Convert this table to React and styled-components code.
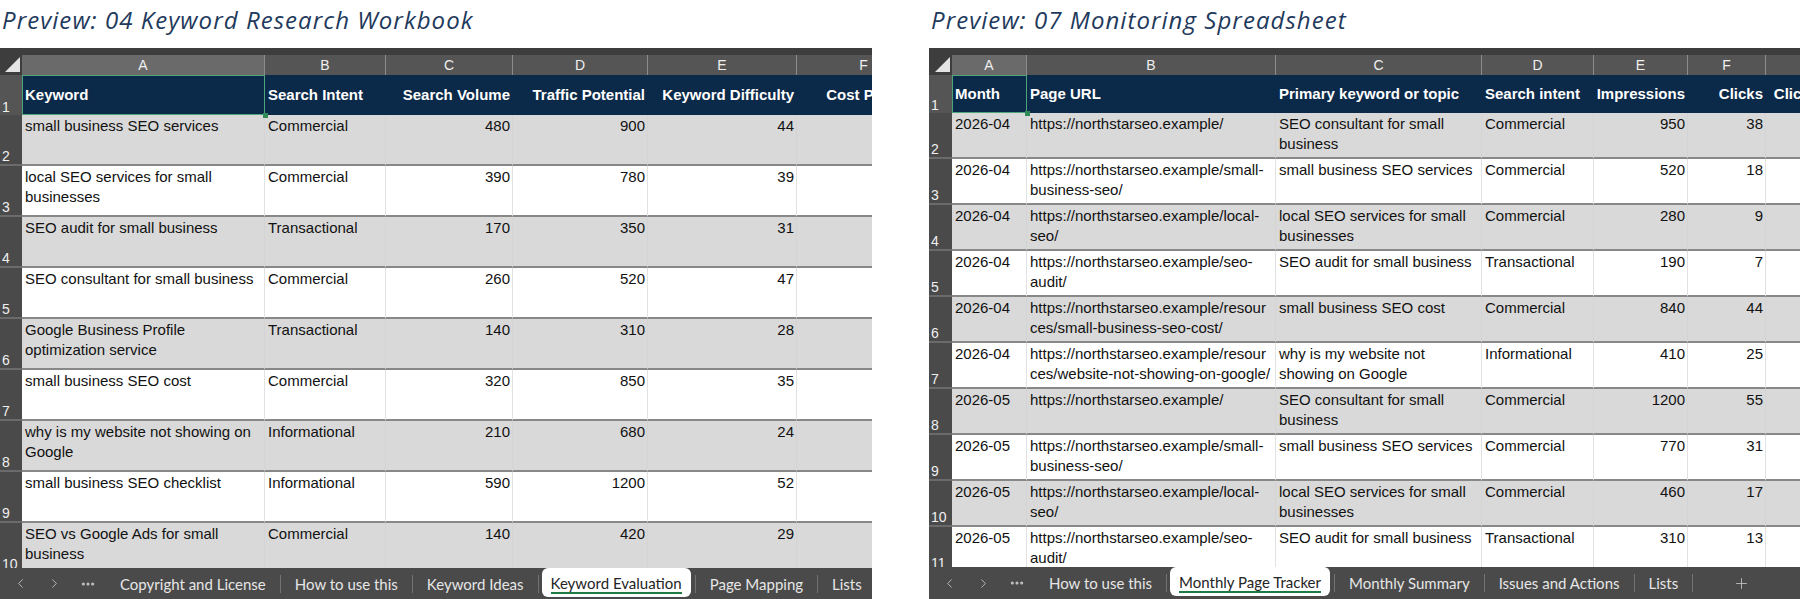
import React from "react";
import styled, { createGlobalStyle, css } from "styled-components";
import { ChevronLeft, ChevronRight, Ellipsis, Plus } from "lucide-react";

const GlobalStyle = createGlobalStyle`
  html, body { margin: 0; padding: 0; background: #fff; }
  body { font-family: "Liberation Sans", Arial, sans-serif; overflow: hidden; }
`;

const Page = styled.div`
  display: flex;
  gap: 57px;
  width: 1800px;
  height: 599px;
  overflow: hidden;
`;

const Panel = styled.section`
  display: flex;
  flex-direction: column;
  flex-shrink: 0;
  width: ${(p) => p.$width}px;
  height: 100%;
`;

const Title = styled.h2`
  margin: 0;
  height: 48px;
  padding-left: 2px;
  font-family: "Open Sans", sans-serif;
  font-style: italic;
  font-weight: 400;
  font-size: 24px;
  letter-spacing: 1.05px;
  line-height: 40px;
  color: #1f3a5c;
  white-space: nowrap;
`;

const Sheet = styled.div`
  flex: 1;
  display: flex;
  flex-direction: column;
  overflow: hidden;
  background: #4a4a4a;
`;

const Body = styled.div`
  flex: 1;
  overflow: hidden;
`;

const Row = styled.div`
  display: grid;
  grid-template-columns: ${(p) => p.$cols};
  height: ${(p) => p.$h}px;
`;

const LetterRow = styled(Row)`
  align-items: end;
  background: #3d3d3d;
`;

const Corner = styled.div`
  height: 27px;
  box-sizing: border-box;
  display: flex;
  align-items: flex-end;
  justify-content: flex-end;
  padding: 0 2px 3px 0;
`;

const CornerMark = styled.span`
  width: 0;
  height: 0;
  border-left: 15px solid transparent;
  border-bottom: 15px solid #e4e4e4;
`;

const Letter = styled.div`
  height: 20px;
  box-sizing: border-box;
  background: ${(p) => (p.$active ? "#6a6a6a" : "#555555")};
  border-right: 1px solid #8c8c8c;
  color: #efefef;
  font-size: 14px;
  line-height: 20px;
  text-align: center;
`;

const RowNum = styled.div`
  box-sizing: border-box;
  background: ${(p) => (p.$active ? "#555555" : "#4a4a4a")};
  border-bottom: ${(p) => (p.$line ? "2px solid #6b6b6b" : "none")};
  color: #f0f0f0;
  font-size: 14px;
  line-height: 16px;
  display: flex;
  align-items: flex-end;
  padding: 0 0 0 2px;
  overflow: hidden;
`;

const HeadCell = styled.div`
  position: relative;
  box-sizing: border-box;
  background: #0b2948;
  color: #fff;
  font-weight: 700;
  font-size: 15px;
  display: flex;
  align-items: center;
  justify-content: ${(p) => (p.$right ? "flex-end" : "flex-start")};
  padding: 0 3px 1px 3px;
  white-space: nowrap;
  ${(p) =>
    p.$selected &&
    css`
      box-shadow: inset 0 0 0 1px #4fa57a;
      &::after {
        content: "";
        position: absolute;
        right: -3px;
        bottom: -3px;
        width: 5px;
        height: 5px;
        background: #2f8a57;
        z-index: 2;
      }
    `}
`;

const DataCell = styled.div`
  box-sizing: border-box;
  background: ${(p) => (p.$shade ? "#d9d9d9" : "#ffffff")};
  border-bottom: 2px solid #888888;
  border-right: 1px solid ${(p) => (p.$shade ? "#d4d4d4" : "#e2e2e2")};
  padding: 1px 2px 0 3px;
  color: #111;
  font-size: 15px;
  line-height: 19.5px;
  text-align: ${(p) => (p.$right ? "right" : "left")};
  white-space: pre;
  overflow: hidden;
`;

const TabBar = styled.div`
  flex-shrink: 0;
  height: ${(p) => p.$h}px;
  background: #4a4a4a;
  display: flex;
  align-items: center;
  font-family: Lato, "Open Sans", sans-serif;
  font-size: 15px;
  color: #e6e6e6;
  white-space: nowrap;
  & > * {
    flex-shrink: 0;
  }
`;

const NavButton = styled.span`
  width: 34px;
  display: flex;
  justify-content: center;
  color: #c4c4c4;
  &:first-child {
    margin-left: 3px;
  }
`;

const Tab = styled.span`
  padding: 0 14px;
  &:nth-child(4) {
    padding-left: 15px;
  }
`;

const ActiveTab = styled.span`
  align-self: flex-start;
  height: 29px;
  margin: 0 4px 0 3px;
  padding: 0 9px;
  background: #fff;
  border-radius: 6px;
  color: #242424;
  display: flex;
  align-items: center;
`;

const ActiveLabel = styled.span`
  padding-top: 3px;
  border-bottom: 2px solid #1e7a45;
  line-height: 18px;
`;

const Sep = styled.span`
  width: 1px;
  height: 18px;
  background: #727272;
`;

const AddSheet = styled.span`
  padding: 0 40px;
  display: flex;
  color: #bdbdbd;
`;

const tpl = (cols) => cols.map((c) => `${c}px`).join(" ");

const keywordSheet = {
  title: "Preview: 04 Keyword Research Workbook",
  width: 872,
  cols: [22, 243, 121, 127, 135, 149, 134],
  headH: 40,
  rowH: 51,
  tabH: 31,
  right: [false, false, true, true, true, true],
  head: ["Keyword", "Search Intent", "Search Volume", "Traffic Potential", "Keyword Difficulty", "Cost Per Click"],
  rows: [
    ["small business SEO services", "Commercial", "480", "900", "44", ""],
    ["local SEO services for small\nbusinesses", "Commercial", "390", "780", "39", ""],
    ["SEO audit for small business", "Transactional", "170", "350", "31", ""],
    ["SEO consultant for small business", "Commercial", "260", "520", "47", ""],
    ["Google Business Profile\noptimization service", "Transactional", "140", "310", "28", ""],
    ["small business SEO cost", "Commercial", "320", "850", "35", ""],
    ["why is my website not showing on\nGoogle", "Informational", "210", "680", "24", ""],
    ["small business SEO checklist", "Informational", "590", "1200", "52", ""],
    ["SEO vs Google Ads for small\nbusiness", "Commercial", "140", "420", "29", ""],
  ],
  tabs: ["Copyright and License", "How to use this", "Keyword Ideas", "Keyword Evaluation", "Page Mapping", "Lists"],
  active: "Keyword Evaluation",
  add: false,
};

const monitorSheet = {
  title: "Preview: 07 Monitoring Spreadsheet",
  width: 871,
  cols: [23, 75, 249, 206, 112, 94, 78, 140],
  headH: 38,
  rowH: 46,
  tabH: 32,
  right: [false, false, false, false, true, true, true],
  head: ["Month", "Page URL", "Primary keyword or topic", "Search intent", "Impressions", "Clicks", "Click-through rate"],
  rows: [
    ["2026-04", "https://northstarseo.example/", "SEO consultant for small\nbusiness", "Commercial", "950", "38", ""],
    ["2026-04", "https://northstarseo.example/small-\nbusiness-seo/", "small business SEO services", "Commercial", "520", "18", ""],
    ["2026-04", "https://northstarseo.example/local-\nseo/", "local SEO services for small\nbusinesses", "Commercial", "280", "9", ""],
    ["2026-04", "https://northstarseo.example/seo-\naudit/", "SEO audit for small business", "Transactional", "190", "7", ""],
    ["2026-04", "https://northstarseo.example/resour\nces/small-business-seo-cost/", "small business SEO cost", "Commercial", "840", "44", ""],
    ["2026-04", "https://northstarseo.example/resour\nces/website-not-showing-on-google/", "why is my website not\nshowing on Google", "Informational", "410", "25", ""],
    ["2026-05", "https://northstarseo.example/", "SEO consultant for small\nbusiness", "Commercial", "1200", "55", ""],
    ["2026-05", "https://northstarseo.example/small-\nbusiness-seo/", "small business SEO services", "Commercial", "770", "31", ""],
    ["2026-05", "https://northstarseo.example/local-\nseo/", "local SEO services for small\nbusinesses", "Commercial", "460", "17", ""],
    ["2026-05", "https://northstarseo.example/seo-\naudit/", "SEO audit for small business", "Transactional", "310", "13", ""],
  ],
  tabs: ["How to use this", "Monthly Page Tracker", "Monthly Summary", "Issues and Actions", "Lists"],
  active: "Monthly Page Tracker",
  add: true,
};

const LETTERS = "ABCDEFGH";

const SheetTabs = ({ sheet }) => (
  <TabBar $h={sheet.tabH}>
    <NavButton>
      <ChevronLeft size={15} strokeWidth={1.4} />
    </NavButton>
    <NavButton>
      <ChevronRight size={15} strokeWidth={1.4} />
    </NavButton>
    <NavButton>
      <Ellipsis size={16} strokeWidth={2.6} />
    </NavButton>
    {sheet.tabs.map((name, i) => (
      <React.Fragment key={name}>
        {i > 0 && <Sep />}
        {name === sheet.active ? (
          <ActiveTab>
            <ActiveLabel>{name}</ActiveLabel>
          </ActiveTab>
        ) : (
          <Tab>{name}</Tab>
        )}
      </React.Fragment>
    ))}
    {sheet.add && (
      <>
        <Sep />
        <AddSheet>
          <Plus size={17} strokeWidth={1.3} />
        </AddSheet>
      </>
    )}
  </TabBar>
);

const Workbook = ({ sheet }) => {
  const cols = tpl(sheet.cols);
  const dataCols = sheet.cols.length - 1;
  return (
    <Panel $width={sheet.width}>
      <Title>{sheet.title}</Title>
      <Sheet>
        <LetterRow $cols={cols} $h={27}>
          <Corner>
            <CornerMark />
          </Corner>
          {Array.from({ length: dataCols }).map((_, i) => (
            <Letter key={i} $active={i === 0}>
              {LETTERS[i]}
            </Letter>
          ))}
        </LetterRow>
        <Body>
          <Row $cols={cols} $h={sheet.headH}>
            <RowNum $active>1</RowNum>
            {sheet.head.map((h, i) => (
              <HeadCell key={h} $right={sheet.right[i]} $selected={i === 0}>
                {h}
              </HeadCell>
            ))}
          </Row>
          {sheet.rows.map((row, r) => (
            <Row key={r} $cols={cols} $h={sheet.rowH}>
              <RowNum $line>{r + 2}</RowNum>
              {row.map((value, c) => (
                <DataCell key={c} $shade={r % 2 === 0} $right={sheet.right[c]}>
                  {value}
                </DataCell>
              ))}
            </Row>
          ))}
        </Body>
        <SheetTabs sheet={sheet} />
      </Sheet>
    </Panel>
  );
};

export default function App() {
  return (
    <>
      <GlobalStyle />
      <Page>
        <Workbook sheet={keywordSheet} />
        <Workbook sheet={monitorSheet} />
      </Page>
    </>
  );
}
